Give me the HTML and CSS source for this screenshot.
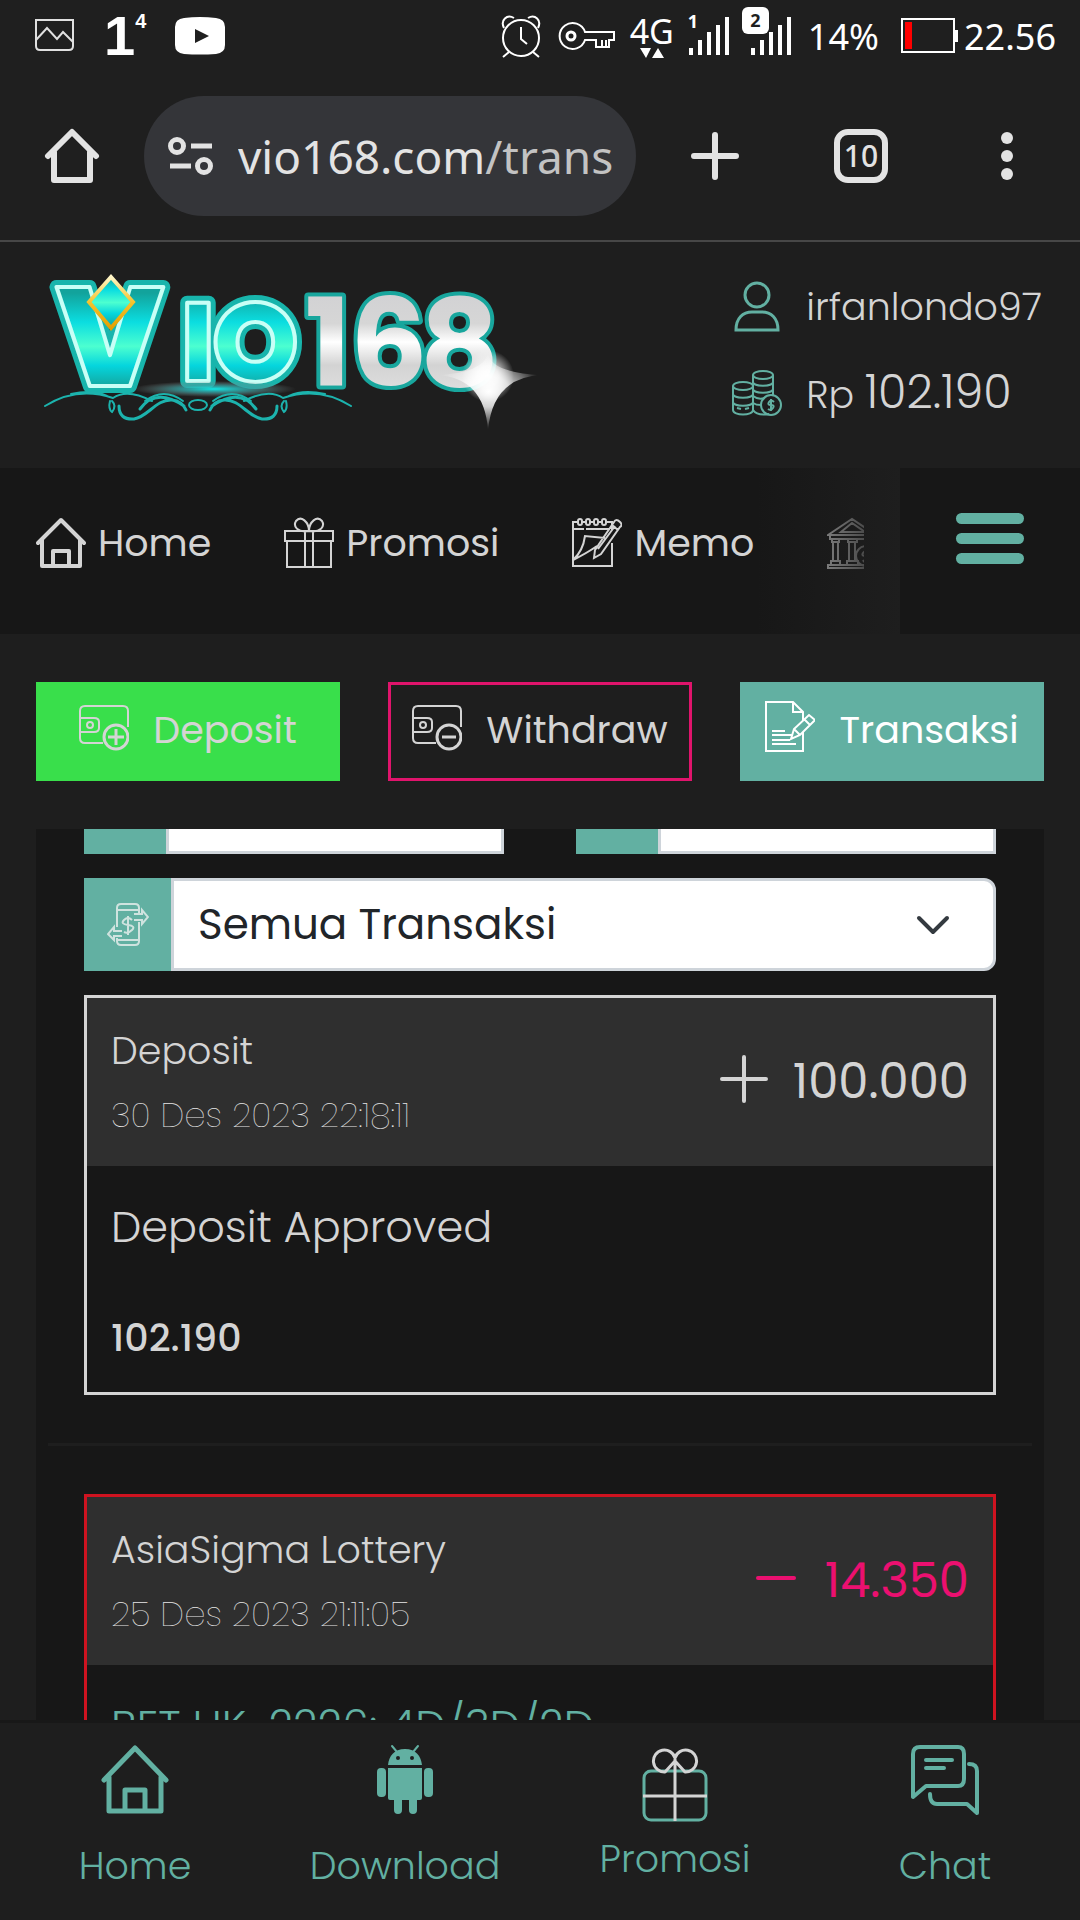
FILE: index.html
```html
<!DOCTYPE html>
<html lang="id">
<head>
  <meta charset="UTF-8">
  <meta name="viewport" content="width=device-width, initial-scale=1.0">
  <title>VIO168 - Transaksi</title>
  <link rel="stylesheet" href="styles.css">
</head>
<body>
  <!-- phone status bar -->
  <div class="status-bar">
    <div class="status-left">
      <svg width="42" height="36" viewBox="0 0 42 36" fill="none" stroke="#e0e0e0" stroke-width="2"><path d="M2 2h37v26q0 4-4 4H6q-4 0-4-4zM2 22l11-12 10 11 6-7 10 10"/></svg>
      <span class="notif">1<sup>4</sup></span>
      <svg width="52" height="38" viewBox="0 0 52 38"><path fill="#fff" fill-rule="evenodd" d="M10 1Q26-1 42 1q9 1 9 9v18q0 8-9 9-16 1-32 0-9-1-9-9V10q0-8 9-9zM21 12v14l14-7z"/></svg>
    </div>
    <div class="status-right">
      <svg width="44" height="44" viewBox="0 0 44 44" fill="none" stroke="#fff" stroke-width="2"><circle cx="21" cy="24" r="18"/><path d="M21 13v12l6 5M9 38l-6 5M33 38l6 5M4 14C0 6 7 0 14 4M38 14c4-8-3-14-10-10"/></svg>
      <svg width="58" height="30" viewBox="0 0 58 30" fill="none" stroke="#fff" stroke-width="2"><path d="M27 11h29v8h-5v7H38v-7H27a13 13 0 1 1 0-8zM44 19v7M48 19v7"/><circle cx="13" cy="15" r="4" stroke-width="3"/></svg>
      <span class="network">4G
        <svg width="26" height="10" viewBox="0 0 26 10" fill="#fff"><path d="M1 0h11L7 10zM13 10h12L19 0z"/></svg>
      </span>
      <span class="signal">
        <svg width="44" height="38" viewBox="0 0 44 38" fill="#fff"><path d="M1 31h4v7H1zM10 23h4v15h-4zM19 15h4v23h-4zM28 8h4v30h-4zM37 0h4v38h-4z"/></svg>
        <b>1</b>
      </span>
      <span class="signal sim-two">
        <svg width="44" height="38" viewBox="0 0 44 38" fill="#fff"><path d="M1 31h4v7H1zM10 23h4v15h-4zM19 15h4v23h-4zM28 8h4v30h-4zM37 0h4v38h-4z"/></svg>
        <b>2</b>
      </span>
      <span>14%</span>
      <svg class="battery" width="57" height="36" viewBox="0 0 57 36"><path fill="none" stroke="#fff" stroke-width="2" d="M1 1h52v33H1z"/><path fill="#f00" d="M4 4h7v27H4z"/><path fill="#fff" d="M53 12h4v12h-4z"/></svg>
      <span>22.56</span>
    </div>
  </div>

  <!-- browser toolbar -->
  <div class="toolbar">
    <button class="tool-btn" aria-label="Home">
      <svg width="56" height="56" viewBox="0 0 56 56" fill="none" stroke="#e3e3e3" stroke-width="6" stroke-linejoin="round" stroke-linecap="round"><path d="M4 28L28 4l24 24M10 24v28h36V24"/></svg>
    </button>
    <div class="address">
      <svg width="46" height="40" viewBox="0 0 46 40" fill="none" stroke="#e3e3e3" stroke-width="5"><circle cx="9" cy="10" r="6.500"/><circle cx="36" cy="30" r="6.500"/><path d="M23 10h21M2 30h21"/></svg>
      <span class="url">vio168.com<span>/trans</span></span>
    </div>
    <button class="tool-btn" aria-label="Tab baru">
      <svg width="48" height="48" viewBox="0 0 48 48" stroke="#e3e3e3" stroke-width="6" stroke-linecap="round"><path d="M24 3v42M3 24h42"/></svg>
    </button>
    <button class="tool-btn"><span class="tab-count">10</span></button>
    <button class="tool-btn" aria-label="Menu browser">
      <svg width="14" height="48" viewBox="0 0 14 48" fill="#e3e3e3"><circle cx="7" cy="6" r="6"/><circle cx="7" cy="24" r="6"/><circle cx="7" cy="42" r="6"/></svg>
    </button>
  </div>

  <header class="site-header">
    <a class="logo" href="#" aria-label="VIO168">
      <svg width="508" height="172" viewBox="0 0 508 172">
        <defs>
          <linearGradient id="aqua" x1="0" y1="0" x2="0" y2="1">
            <stop offset="0" stop-color="#12a39c"/><stop offset=".25" stop-color="#0bdde0"/><stop offset=".5" stop-color="#4cffd0"/><stop offset=".72" stop-color="#05d5dd"/><stop offset="1" stop-color="#169f95"/>
          </linearGradient>
          <linearGradient id="letters" gradientUnits="userSpaceOnUse" x1="0" y1="25" x2="0" y2="122">
            <stop offset="0" stop-color="#12a39c"/><stop offset=".3" stop-color="#0bdde0"/><stop offset=".55" stop-color="#4cffd0"/><stop offset=".75" stop-color="#05d5dd"/><stop offset="1" stop-color="#169f95"/>
          </linearGradient>
          <linearGradient id="silver" gradientUnits="userSpaceOnUse" x1="0" y1="28" x2="0" y2="120">
            <stop offset="0" stop-color="#d2d2d4"/><stop offset=".3" stop-color="#d6d6d6"/><stop offset=".5" stop-color="#fff"/><stop offset=".75" stop-color="#d3d3d3"/><stop offset="1" stop-color="#ddd"/>
          </linearGradient>
          <linearGradient id="gold" x1="0" y1="0" x2="0" y2="1">
            <stop offset="0" stop-color="#fff6c8"/><stop offset=".5" stop-color="#f5c32c"/><stop offset="1" stop-color="#e5a000"/>
          </linearGradient>
          <radialGradient id="glow"><stop offset="0" stop-color="#0fe8e6"/><stop offset=".5" stop-color="#3f9fa0" stop-opacity=".7"/><stop offset="1" stop-color="#888" stop-opacity="0"/></radialGradient>
          <radialGradient id="shine"><stop offset="0" stop-color="#fff"/><stop offset=".4" stop-color="#fff" stop-opacity=".8"/><stop offset="1" stop-color="#fff" stop-opacity="0"/></radialGradient>
        </defs>
        <g class="logo-letters">
          <g class="edge"><text class="big-v" x="74" y="118">V</text><text class="io" x="145 176" y="113">IO</text></g>
          <g class="face"><text class="big-v" x="74" y="118">V</text><text class="io" x="145 176" y="113">IO</text></g>
          <text class="num" x="269 314 384" y="118">168</text>
        </g>
        <ellipse cx="178" cy="121" rx="82" ry="8" fill="url(#glow)"/>
        <path d="M75 9l22 25-22 26-22-26z" fill="url(#aqua)" stroke="url(#gold)" stroke-width="4"/>
        <g fill="none" stroke="#1cb3ad" stroke-width="2" stroke-linecap="round">
          <path d="M9 138q32-20 68-8 M35 126q22-5 36 2 M77 130q14-10 39 3 M74 133q-2 8 2 11q5-6 0-11"/>
          <path stroke-width="3" d="M83 138q0 14 15 13c14-2 22-20 38-19q10 1 14 10 M104 141q16-22 44-3"/>
          <path d="M315 138q-32-20-68-8 M289 126q-22-5-36 2 M247 130q-14-10-39 3 M250 133q2 8-2 11q-5-6 0-11"/>
          <path stroke-width="3" d="M241 138q0 14-15 13c-14-2-22-20-38-19q-10 1-14 10 M220 141q-16-22-44-3"/>
          <path d="M109 133q19-14 38 0M215 133q-19-14-38 0"/>
          <ellipse cx="162" cy="137" rx="9" ry="5"/>
        </g>
        <circle cx="452" cy="108" r="26" fill="url(#shine)"/>
        <path d="M400 107q48-2 52-22q3 20 54 22q-49 2-54 55q-4-53-52-55z" fill="url(#shine)"/>
      </svg>
    </a>
    <div class="account">
      <svg width="50" height="52" viewBox="0 0 50 52" fill="none" stroke="#62b0a2" stroke-width="3"><circle cx="25" cy="14" r="12"/><path d="M4 49c0-12 7-18 16-18h10c9 0 16 6 16 18z"/></svg>
      <span class="name">irfanlondo97</span>
      <svg width="50" height="48" viewBox="0 0 50 48" fill="none" stroke="#62b0a2" stroke-width="2"><ellipse cx="11" cy="17" rx="10" ry="4"/><ellipse cx="31" cy="6" rx="10" ry="4"/><path d="M1 17v24c0 6 20 6 20 0V17M1 25c0 5 20 5 20 0M1 33c0 5 20 5 20 0M21 41V6M41 6v20M21 13c0 5 20 5 20 0M21 20c0 5 20 5 20 0M21 27q5 4 12 2M21 34q3 2 8 2M21 41q4 6 16 4M5 39l4 1M13 40l4-1"/><circle cx="39" cy="36" r="10"/><path d="M42 33q-3-3-5 0t2 3 2 3-5 1M39 30v12"/></svg>
      <span class="name">Rp <span class="balance">102.190</span></span>
    </div>
  </header>

  <nav class="site-nav">
    <div class="nav-scroll">
      <div class="nav-items">
        <a href="#"><svg width="50" height="52" viewBox="0 0 50 52" fill="none" stroke="#d4d4d4" stroke-width="4" stroke-linecap="round" stroke-linejoin="round"><path d="M2 26L25 3l23 23M6 23v26h38V23M17 49V34h16v15"/></svg>Home</a>
        <a href="#"><svg width="50" height="52" viewBox="0 0 50 52" fill="none" stroke="#d4d4d4" stroke-width="2"><path d="M1 14h48v10H1zM3 24v26h44V24M21 14v36M29 14v36M25 14C13 16 9 9 12 4c5-6 13 1 13 10zc12 2 16-5 13-10-5-6-13 1-13 10"/></svg>Promosi</a>
        <a href="#"><svg width="50" height="52" viewBox="0 0 50 52" fill="none" stroke="#d4d4d4" stroke-width="2"><path d="M5 5H1v44h39V26M1 12h11M14 12h24M10 5h3M18 5h3M26 5h3M34 5h6v8M1 43q10-9 12-24l20 2M1 43q14-7 24-14M23 33L42 5q2-4 6 0 3 3 0 5L29 37l-7 4zM40 8l6 5M26 32L43 9"/><rect x="6" y="2" width="4" height="6" rx="2"/><rect x="14" y="2" width="4" height="6" rx="2"/><rect x="22" y="2" width="4" height="6" rx="2"/><rect x="30" y="2" width="4" height="6" rx="2"/></svg>Memo</a>
        <a href="#" aria-label="Bank"><svg width="50" height="52" viewBox="0 0 50 52" fill="none" stroke="#d4d4d4" stroke-width="2"><path d="M1 18L25 2l24 16zM14 15h24L25 6zM3 18v4h44v-4M5 22v3h7v-3M6 25v19M11 25v19M21 22v3h9v-3M22 25v19M28 25v19M4 44h9v4H4zM20 44h11v4H20zM1 48h48v3H1z"/><circle cx="39" cy="39" r="10"/><path d="M42 36q-4-3-6 0t3 3 2 4-5 0"/></svg></a>
      </div>
    </div>
    <button class="menu-btn" aria-label="Menu"><i></i><i></i><i></i></button>
  </nav>

  <main class="content">
    <div class="actions">
      <a class="action deposit" href="#">
        <svg width="50" height="50" viewBox="0 0 50 50" fill="none" stroke="currentColor" stroke-width="2"><path d="M24 38H6q-5 0-5-5V6q0-5 5-5h38q5 0 5 5v16M1 13h14q5 0 5 4v6q0 4-5 4H1"/><circle cx="11" cy="20" r="3"/><circle cx="37" cy="32" r="12" stroke-width="3"/><path stroke-width="3" d="M29 32h16M37 24v16"/></svg>
        Deposit
      </a>
      <a class="action withdraw" href="#">
        <svg width="50" height="50" viewBox="0 0 50 50" fill="none" stroke="currentColor" stroke-width="2"><path d="M24 38H6q-5 0-5-5V6q0-5 5-5h38q5 0 5 5v16M1 13h14q5 0 5 4v6q0 4-5 4H1"/><circle cx="11" cy="20" r="3"/><circle cx="37" cy="32" r="12" stroke-width="3"/><path stroke-width="3" d="M30 32h14"/></svg>
        Withdraw
      </a>
      <a class="action transaksi" href="#">
        <svg width="50" height="58" viewBox="0 0 50 58" fill="none" stroke="currentColor" stroke-width="2"><path d="M38 31v19H1V1h27l10 10v8M28 1v10h10M7 30h13M7 34h20M7 39h18M7 43h24M26 38l3-10 15-14 6 5-15 15zM39 18l6 6M29 28l6 6"/></svg>
        Transaksi
      </a>
    </div>

    <section class="panel">
      <div class="filters">
        <div class="dates">
          <div class="field"><label class="field-icon" for="dateFrom" aria-label="Dari tanggal"></label><input type="text" id="dateFrom"></div>
          <div class="field"><label class="field-icon" for="dateTo" aria-label="Sampai tanggal"></label><input type="text" id="dateTo"></div>
        </div>
        <div class="field type-field">
          <label class="field-icon" for="type" aria-label="Jenis transaksi">
            <svg width="42" height="44" viewBox="0 0 42 44" fill="none" stroke="#cfe3df" stroke-width="2"><path d="M10 24V5q0-4 4-4h14q4 0 4 4v5M32 19v19q0 4-4 4H14q-4 0-4-4v-3M10 7h22M10 37h22M27 11h8V7l6 7-6 7v-4h-8M15 28H7v-4l-6 7 6 6v-4h8M25 17q-4-4-8 0t4 5 4 5-8 2M21 13v19"/></svg>
          </label>
          <select id="type">
            <option>Semua Transaksi</option>
            <option>Deposit</option>
            <option>Withdraw</option>
          </select>
          <svg class="chevron" width="34" height="20" viewBox="0 0 34 20" fill="none" stroke="#343a40" stroke-width="4" stroke-linecap="round" stroke-linejoin="round"><path d="M3 3l14 14L31 3"/></svg>
        </div>
      </div>

      <article class="trx">
        <div class="trx-head">
          <div>
            <h3>Deposit</h3>
            <time>30 Des 2023 22:18:11</time>
          </div>
          <div class="amount"><svg width="50" height="56" viewBox="0 0 50 56" stroke="currentColor" stroke-width="4" stroke-linecap="round"><path d="M25 3v44M3 25h44"/></svg>100.000</div>
        </div>
        <div class="trx-body">
          <p>Deposit Approved</p>
          <strong>102.190</strong>
        </div>
      </article>

      <hr>

      <article class="trx minus">
        <div class="trx-head">
          <div>
            <h3>AsiaSigma Lottery</h3>
            <time>25 Des 2023 21:11:05</time>
          </div>
          <div class="amount"><svg width="50" height="56" viewBox="0 0 50 56" stroke="currentColor" stroke-width="4" stroke-linecap="round"><path d="M7 25h36"/></svg>14.350</div>
        </div>
        <div class="trx-body">
          <p><a href="#">BET HK-2226: 4D/3D/2D</a></p>
        </div>
      </article>
    </section>
  </main>

  <nav class="bottom-nav">
    <a href="#"><svg width="68" height="72" viewBox="0 0 68 72" fill="none" stroke="#62b0a2" stroke-width="5" stroke-linecap="round" stroke-linejoin="round"><path d="M3 36L34 4l31 32M8 33v34h52V33M24 67V46h20v21"/></svg>Home</a>
    <a href="#"><svg width="56" height="72" viewBox="0 0 56 72" fill="#62b0a2"><path fill-rule="evenodd" d="M11 21C12 12 17 5 28 5s16 7 17 16zM21 12a2 2 0 1 0 0 4 2 2 0 0 0 0-4zM35 12a2 2 0 1 0 0 4 2 2 0 0 0 0-4z"/><path d="M15 2l5 6M41 2l-5 6" stroke="#62b0a2" stroke-width="2" stroke-linecap="round"/><path d="M11 24h34v30q0 2-2 2h-3v10a4 4 0 0 1-8 0V56h-7v10a4 4 0 0 1-8 0V56h-4q-2 0-2-2z"/><rect y="24" width="9" height="29" rx="4"/><rect x="47" y="24" width="9" height="29" rx="4"/></svg>Download</a>
    <a class="promo" href="#"><svg width="66" height="76" viewBox="0 0 66 76" fill="none" stroke-width="3"><rect x="2" y="24" width="62" height="49" rx="7" stroke="#62b0a2"/><path stroke="#d4d4d4" stroke-linejoin="round" d="M1 49h64M33 12v62M33 14L23 25A11 11 0 1 1 33 11A11 11 0 1 1 43 25L33 14"/></svg>Promosi</a>
    <a href="#"><svg width="68" height="72" viewBox="0 0 68 72" fill="none" stroke="#62b0a2" stroke-width="4" stroke-linecap="round" stroke-linejoin="round"><path d="M2 53V10q0-7 7-7h38q6 0 6 7v25q0 7-6 7H15zM15 16h26M15 24h18M58 20q8 0 8 7v42l-10-9H26q-7 0-7-10"/></svg>Chat</a>
  </nav>
</body>
</html>
```
FILE: styles.css
```css
* {
  box-sizing: border-box;
}
body {
  margin: 0;
  height: 100vh;
  display: flex;
  flex-direction: column;
  overflow: hidden;
  background: #1e1e1e;
  color: #d4d4d4;
  font-family: Poppins, Inter, sans-serif;
  font-size: 38px;
  font-weight: 300;
}
a {
  color: inherit;
  text-decoration: none;
}
button {
  border: none;
  background: none;
  padding: 0;
  cursor: pointer;
}
svg {
  display: block;
  flex-shrink: 0;
}

/* status bar */
.status-bar {
  display: flex;
  justify-content: space-between;
  align-items: center;
  height: 72px;
  padding: 0 24px 0 34px;
  background: #1f1f1f;
  color: #fff;
  font-family: "Noto Sans", sans-serif;
  font-size: 36px;
  font-weight: 400;
}
.status-left, .status-right {
  display: flex;
  align-items: center;
}
.status-left {
  gap: 28px;
}
.status-right {
  gap: 14px;
}
.notif {
  display: flex;
  font: bold 56px/60px "Liberation Sans", sans-serif;
}
.notif sup {
  font-size: 20px;
  line-height: 30px;
}
.network {
  display: flex;
  flex-direction: column;
  align-items: center;
  font-size: 34px;
  line-height: 34px;
}
.signal {
  position: relative;
}
.signal b {
  position: absolute;
  left: 0;
  top: -8px;
  font-size: 18px;
  line-height: 24px;
}
.sim-two {
  margin-left: 4px;
}
.sim-two b {
  left: -8px;
  top: -10px;
  width: 27px;
  line-height: 27px;
  text-align: center;
  border-radius: 6px;
  background: #fff;
  color: #1f1f1f;
}
.battery {
  margin: 0 -8px 0 8px;
}

/* browser toolbar */
.toolbar {
  display: grid;
  grid-template-columns: 144px 1fr repeat(3, 146px);
  align-items: center;
  height: 170px;
  background: #1f1f1f;
  border-bottom: 2px solid #474747;
}
.tool-btn {
  display: flex;
  justify-content: center;
}
.address {
  display: flex;
  align-items: center;
  gap: 24px;
  min-width: 0;
  height: 120px;
  margin-right: 6px;
  padding: 0 24px;
  border-radius: 60px;
  background: #343539;
}
.url {
  flex: 1;
  overflow: hidden;
  white-space: nowrap;
  font: 46px "Noto Sans", sans-serif;
  color: #e3e3e3;
}
.url span {
  color: #c3c3c3;
}
.tab-count {
  width: 54px;
  height: 54px;
  border: 6px solid #e3e3e3;
  border-radius: 14px;
  color: #e3e3e3;
  font: 500 30px/42px "Noto Sans", sans-serif;
}

/* logo and account */
.site-header {
  display: flex;
  justify-content: space-between;
  height: 226px;
  padding: 26px 38px 0 36px;
}
.logo-letters {
  font-family: Poppins, Lato, sans-serif;
  font-weight: 800;
  stroke-linejoin: round;
}
.big-v {
  font-size: 140px;
  font-weight: 900;
  text-anchor: middle;
}
.io {
  font-size: 110px;
}
.edge {
  fill: #18b5ac;
  stroke: #18b5ac;
  stroke-width: 14px;
}
.face {
  fill: url(#letters);
  stroke: #c8fff6;
  stroke-width: 4px;
}
.num {
  font-size: 122px;
  font-weight: 700;
  fill: url(#silver);
  stroke: #18a69d;
  stroke-width: 8px;
  paint-order: stroke;
}
.account {
  display: grid;
  grid-template-columns: 50px auto;
  grid-auto-rows: 86px;
  column-gap: 24px;
  align-items: center;
  justify-items: start;
  height: 172px;
  margin-top: -4px;
}
.name {
  line-height: 60px;
  white-space: nowrap;
}
.balance {
  font-size: 46px;
}

/* site navigation */
.site-nav {
  display: flex;
  height: 166px;
  background: #171717;
}
.nav-scroll {
  position: relative;
  flex: 1;
  min-width: 0;
  padding: 46px 36px 0;
}
.nav-scroll::after {
  content: "";
  position: absolute;
  top: 0;
  right: 0;
  bottom: 0;
  width: 144px;
  background: linear-gradient(to right, rgba(30, 30, 30, 0), #1e1e1e);
}
.nav-items {
  display: flex;
  gap: 73px;
  overflow: hidden;
  font-weight: 400;
}
.nav-items a {
  display: flex;
  align-items: center;
  gap: 12px;
}
.menu-btn {
  width: 180px;
  display: flex;
  flex-direction: column;
  align-items: center;
  gap: 9px;
  padding-top: 45px;
}
.menu-btn i {
  width: 68px;
  height: 11px;
  border-radius: 6px;
  background: #62b0a2;
}

/* deposit / withdraw / transaksi */
.content {
  flex: 1;
  min-height: 0;
  display: flex;
  flex-direction: column;
  gap: 48px;
  padding: 48px 36px 0;
}
.actions {
  display: grid;
  grid-template-columns: repeat(3, 1fr);
  gap: 48px;
}
.action {
  display: flex;
  align-items: center;
  justify-content: center;
  gap: 24px;
  height: 99px;
  padding-bottom: 4px;
  border: 3px solid transparent;
  font-weight: 400;
  white-space: nowrap;
}
.deposit {
  background: #39df4b;
}
.withdraw {
  border-color: #e0146c;
}
.transaksi {
  background: #62b0a2;
  color: #fff;
}

/* transaction history, scrolled under the buttons */
.panel {
  flex: 1;
  min-height: 0;
  overflow: hidden;
  padding: 0 48px;
  background: #171717;
}
.filters {
  margin-top: -68px;
}
.dates {
  display: grid;
  grid-template-columns: 1fr 1fr;
  gap: 72px;
  margin-bottom: 24px;
}
.field {
  position: relative;
  display: flex;
  min-width: 0;
  height: 93px;
}
.field-icon {
  flex: 0 0 82px;
  display: flex;
  align-items: center;
  justify-content: center;
  background: #62b0a2;
}
.type-field .field-icon {
  flex-basis: 87px;
}
.field input, .field select {
  flex: 1;
  min-width: 0;
  border: 3px solid #ced4da;
  background: #fff;
  color: #212529;
  font: inherit;
}
.field select {
  appearance: none;
  padding: 0 24px;
  border-radius: 0 12px 12px 0;
  font-size: 42px;
  font-weight: 400;
}
.chevron {
  position: absolute;
  right: 46px;
  top: 37px;
}
.trx {
  margin-top: 24px;
  border: 3px solid #d4d4d4;
}
.trx-head {
  display: flex;
  align-items: center;
  justify-content: space-between;
  height: 168px;
  padding: 0 24px;
  background: #2f2f2f;
}
.trx h3 {
  margin: 0 0 8px;
  font-size: 38px;
  font-weight: 300;
  line-height: 58px;
}
.trx time {
  display: block;
  color: #e6e6e6;
  font-size: 34px;
  font-weight: 200;
  line-height: 54px;
}
.amount {
  display: flex;
  align-items: center;
  gap: 24px;
  font-size: 48px;
  font-weight: 400;
}
.minus .amount {
  color: #eb1070;
}
.trx-body {
  height: 226px;
  padding: 28px 24px 0;
}
.trx-body p {
  margin: 0;
  font-size: 43px;
  line-height: 66px;
}
.trx-body strong {
  display: block;
  margin-top: 48px;
  font-weight: 500;
  line-height: 60px;
}
hr {
  height: 3px;
  margin: 48px -36px;
  border: none;
  background: #1e1e1e;
}
.minus {
  border-color: #cf1320;
}
.minus p {
  color: #62b0a2;
}

/* bottom bar */
.bottom-nav {
  display: grid;
  grid-template-columns: repeat(4, 1fr);
  height: 200px;
  padding-top: 21px;
  border-top: 3px solid #181818;
  color: #62b0a2;
}
.bottom-nav a {
  display: flex;
  flex-direction: column;
  align-items: center;
  gap: 20px;
  line-height: 60px;
}
.bottom-nav .promo {
  gap: 6px;
  padding-top: 3px;
}
```
